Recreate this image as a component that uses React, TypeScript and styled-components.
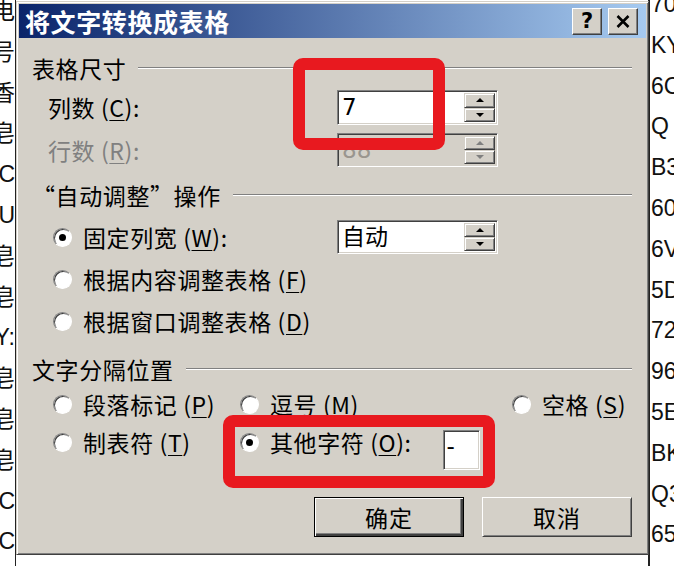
import React from "react";
import styled, { createGlobalStyle } from "styled-components";

const FACE = "#d4d0c8";
const SHADOW = "#808080";
const DARK = "#404040";
const HI = "#ffffff";
const RED = "#e8191f";

const GlobalStyle = createGlobalStyle`
  html, body {
    margin: 0;
    padding: 0;
    background: #fff;
  }
  body {
    font-family: "Noto Sans CJK SC", "Noto Sans", sans-serif;
    color: #000;
  }
`;

const Page = styled.div`
  position: relative;
  width: 674px;
  height: 566px;
  overflow: hidden;
  background: #fff;
  display: flex;
`;

// document behind the dialog
const DocLeft = styled.div`
  width: 15px;
  border-right: 1px solid #222;
  overflow: hidden;
  display: flex;
  flex-direction: column;
  margin-top: -9px;
`;

const DocMid = styled.div`
  flex: 1;
`;

const DocRight = styled.div`
  width: 23px;
  border-left: 2px solid #222;
  overflow: hidden;
  display: flex;
  flex-direction: column;
  margin-top: -16px;
  padding-left: 1px;
`;

const DocLine = styled.div<{ $end?: boolean }>`
  height: 40.8px;
  line-height: 40.8px;
  display: flex;
  justify-content: ${(p) => (p.$end ? "flex-end" : "flex-start")};
  font-family: "Liberation Sans", "Noto Sans CJK SC", sans-serif;
  font-size: 23px;
  white-space: nowrap;
  color: #111;
  span {
    flex-shrink: 0;
  }
`;

// dialog window
const Dialog = styled.div`
  position: absolute;
  left: 16px;
  top: 1px;
  width: 633px;
  height: 554px;
  box-sizing: border-box;
  background: ${FACE};
  border: 1px solid;
  border-color: ${FACE} ${DARK} ${DARK} ${FACE};
  box-shadow: inset 1px 1px 0 ${HI}, inset -1px -1px 0 ${SHADOW};
  padding: 2px;
  display: flex;
  flex-direction: column;
`;

const TitleBar = styled.div`
  height: 34px;
  flex-shrink: 0;
  background: linear-gradient(to right, #0a246a, #a6caf0);
  display: flex;
  align-items: center;
  padding: 0 8px 0 6px;
  gap: 6px;
`;

const Title = styled.div`
  flex: 1;
  color: #fff;
  font-size: 25px;
  font-weight: 700;
  letter-spacing: 0.6px;
  line-height: 1;
`;

const TitleBtn = styled.div`
  width: 30px;
  height: 27px;
  box-sizing: border-box;
  background: ${FACE};
  border: 1px solid;
  border-color: ${HI} ${DARK} ${DARK} ${HI};
  box-shadow: inset -1px -1px 0 ${SHADOW};
  display: flex;
  align-items: center;
  justify-content: center;
  font-family: "DejaVu Sans", sans-serif;
  font-weight: 700;
  font-size: 21px;
  line-height: 1;
`;

const Body = styled.div`
  flex: 1;
  display: flex;
  flex-direction: column;
  padding: 16px 14px 0 13px;
  font-size: 23px;
  line-height: 1;
`;

const GroupHeader = styled.div<{ $top: number }>`
  height: 28px;
  margin-top: ${(p) => p.$top}px;
  display: flex;
  align-items: center;
  gap: 12px;
  letter-spacing: 0.6px;
`;

const Rule = styled.div`
  flex: 1;
  border-top: 1px solid ${SHADOW};
  border-bottom: 1px solid ${HI};
`;

const FieldGrid = styled.div<{ $top: number }>`
  display: grid;
  grid-template-columns: 305px 161px;
  grid-template-rows: 35px 34px;
  row-gap: 8px;
  margin-top: ${(p) => p.$top}px;
  align-items: center;
`;

const FieldLabel = styled.div<{ $dim?: boolean }>`
  padding-left: 16px;
  color: ${(p) => (p.$dim ? SHADOW : "#000")};
  letter-spacing: 0.6px;
`;

const Mn = styled.span`
  text-decoration: underline;
  text-decoration-thickness: 1px;
  text-underline-offset: 3px;
`;

const Key = ({ k }: { k: string }) => (
  <>
    (<Mn>{k}</Mn>)
  </>
);

const Sunken = styled.div<{ $h: number; $w: number; $dim?: boolean }>`
  width: ${(p) => p.$w}px;
  height: ${(p) => p.$h}px;
  box-sizing: border-box;
  background: ${(p) => (p.$dim ? FACE : "#fff")};
  border: 1px solid;
  border-color: ${SHADOW} ${HI} ${HI} ${SHADOW};
  box-shadow: inset 1px 1px 0 ${DARK}, inset -1px -1px 0 ${FACE};
  padding: 2px 2px 2px 4px;
  display: flex;
  align-items: center;
  color: ${(p) => (p.$dim ? "#9a968f" : "#000")};
`;

const Value = styled.div`
  flex: 1;
  font-family: "DejaVu Sans", "Noto Sans CJK SC", sans-serif;
  font-size: 23px;
`;

const SpinCol = styled.div`
  width: 31px;
  align-self: stretch;
  display: flex;
  flex-direction: column;
`;

const SpinBtn = styled.div`
  flex: 1;
  background: ${FACE};
  border: 1px solid;
  border-color: ${FACE} ${DARK} ${DARK} ${FACE};
  box-shadow: inset 1px 1px 0 ${HI}, inset -1px -1px 0 ${SHADOW};
  display: flex;
  align-items: center;
  justify-content: center;
`;

const Arrow = styled.span<{ $up?: boolean; $dim?: boolean }>`
  width: 0;
  height: 0;
  border-left: 4px solid transparent;
  border-right: 4px solid transparent;
  ${(p) =>
    p.$up
      ? `border-bottom: 4px solid ${p.$dim ? SHADOW : "#000"};`
      : `border-top: 4px solid ${p.$dim ? SHADOW : "#000"};`}
`;

const SpinBox = ({ value, dim, h }: { value: string; dim?: boolean; h: number }) => (
  <Sunken $w={161} $h={h} $dim={dim}>
    <Value>{value}</Value>
    <SpinCol>
      <SpinBtn>
        <Arrow $up $dim={dim} />
      </SpinBtn>
      <SpinBtn>
        <Arrow $dim={dim} />
      </SpinBtn>
    </SpinCol>
  </Sunken>
);

const RadioList = styled.div`
  display: grid;
  grid-template-columns: 305px 161px;
  grid-template-rows: 42px 42px 42px;
  margin-top: 7px;
  align-items: center;
`;

const Indent = styled.div`
  padding-left: 21px;
`;

const RadioItem = styled.div`
  display: flex;
  align-items: center;
  gap: 11px;
  letter-spacing: 0.6px;
  white-space: nowrap;
`;

const Dot = styled.span<{ $on?: boolean }>`
  width: 19px;
  height: 19px;
  flex-shrink: 0;
  box-sizing: border-box;
  border-radius: 50%;
  border: 1.5px solid;
  border-color: ${SHADOW} ${HI} ${HI} ${SHADOW};
  background: #fff;
  box-shadow: inset 1px 1px 0 ${DARK};
  display: flex;
  align-items: center;
  justify-content: center;
  &::after {
    content: "";
    width: 7px;
    height: 7px;
    border-radius: 50%;
    background: #000;
    display: ${(p) => (p.$on ? "block" : "none")};
  }
`;

const Radio = ({ on, children }: { on?: boolean; children: React.ReactNode }) => (
  <RadioItem>
    <Dot $on={on} />
    <span>{children}</span>
  </RadioItem>
);

const SepGrid = styled.div`
  display: grid;
  grid-template-columns: 187px 272px 1fr;
  grid-template-rows: 38px 38px;
  margin-top: 2px;
  padding-left: 21px;
  align-items: center;
`;

const OtherCell = styled.div`
  display: flex;
  align-items: center;
  align-self: stretch;
`;

const OtherInput = styled(Sunken)`
  align-self: flex-start;
  margin-top: 7px;
  margin-left: 31px;
  padding-left: 3px;
  align-items: flex-start;
  padding-top: 4px;
`;

const ButtonRow = styled.div`
  display: flex;
  justify-content: flex-end;
  gap: 18px;
  margin-top: 36px;
`;

const PushButton = styled.div<{ $default?: boolean }>`
  width: 150px;
  height: 40px;
  box-sizing: border-box;
  display: flex;
  align-items: center;
  justify-content: center;
  font-size: 23px;
  letter-spacing: 1px;
  background: ${FACE};
  border: 1px solid;
  border-color: ${(p) => (p.$default ? "#000" : `${HI} ${DARK} ${DARK} ${HI}`)};
  box-shadow: ${(p) =>
    p.$default
      ? `inset 1px 1px 0 ${HI}, inset -2px -2px 0 ${DARK}, inset -3px -3px 0 ${SHADOW}`
      : `inset 1px 1px 0 ${FACE}, inset -1px -1px 0 ${SHADOW}`};
`;

// red marker boxes drawn over the screenshot
const Mark = styled.div<{ $l: number; $t: number; $w: number; $h: number }>`
  position: absolute;
  left: ${(p) => p.$l}px;
  top: ${(p) => p.$t}px;
  width: ${(p) => p.$w}px;
  height: ${(p) => p.$h}px;
  box-sizing: border-box;
  border: 12px solid ${RED};
  border-radius: 10px;
`;

const leftDoc = ["电", "号", "香", "皂", "0C", "BU", "皂", "皂", "Y:", "皂", "皂", "皂", "0C", "0C", "皂"];
const rightDoc = ["70", "KY", "6C", " Q", "B3", "60", "6V", "5D", "72", "96", "5E", "BK", "Q3", "65", "7A"];

export default function App() {
  return (
    <Page>
      <GlobalStyle />
      <DocLeft>
        {leftDoc.map((t, i) => (
          <DocLine key={i} $end>
            <span>{t}</span>
          </DocLine>
        ))}
      </DocLeft>
      <DocMid />
      <DocRight>
        {rightDoc.map((t, i) => (
          <DocLine key={i}>
            <span>{t}</span>
          </DocLine>
        ))}
      </DocRight>

      <Dialog>
        <TitleBar>
          <Title>将文字转换成表格</Title>
          <TitleBtn>?</TitleBtn>
          <TitleBtn>
            <svg width="14" height="13" viewBox="0 0 14 13">
              <path d="M1.5 1 L12.5 12 M12.5 1 L1.5 12" stroke="#000" strokeWidth="2.6" />
            </svg>
          </TitleBtn>
        </TitleBar>
        <Body>
          <GroupHeader $top={0}>
            <span>表格尺寸</span>
            <Rule />
          </GroupHeader>
          <FieldGrid $top={8}>
            <FieldLabel>
              列数 <Key k="C" />:
            </FieldLabel>
            <SpinBox value="7" h={35} />
            <FieldLabel $dim>
              行数 <Key k="R" />:
            </FieldLabel>
            <SpinBox value="88" h={34} dim />
          </FieldGrid>

          <GroupHeader $top={14}>
            <span>“自动调整”操作</span>
            <Rule />
          </GroupHeader>
          <RadioList>
            <Indent>
              <Radio on>
                固定列宽 <Key k="W" />:
              </Radio>
            </Indent>
            <SpinBox value="自动" h={34} />
            <Indent>
              <Radio>
                根据内容调整表格 <Key k="F" />
              </Radio>
            </Indent>
            <div />
            <Indent>
              <Radio>
                根据窗口调整表格 <Key k="D" />
              </Radio>
            </Indent>
            <div />
          </RadioList>

          <GroupHeader $top={13}>
            <span>文字分隔位置</span>
            <Rule />
          </GroupHeader>
          <SepGrid>
            <Radio>
              段落标记 <Key k="P" />
            </Radio>
            <Radio>
              逗号 <Key k="M" />
            </Radio>
            <Radio>
              空格 <Key k="S" />
            </Radio>
            <Radio>
              制表符 <Key k="T" />
            </Radio>
            <OtherCell>
              <Radio on>
                其他字符 <Key k="O" />:
              </Radio>
              <OtherInput $w={37} $h={40}>
                <Value>-</Value>
              </OtherInput>
            </OtherCell>
            <div />
          </SepGrid>

          <ButtonRow>
            <PushButton $default>确定</PushButton>
            <PushButton>取消</PushButton>
          </ButtonRow>
        </Body>
      </Dialog>

      <Mark $l={293} $t={58} $w={152} $h={92} />
      <Mark $l={223} $t={415} $w={272} $h={73} />
    </Page>
  );
}
